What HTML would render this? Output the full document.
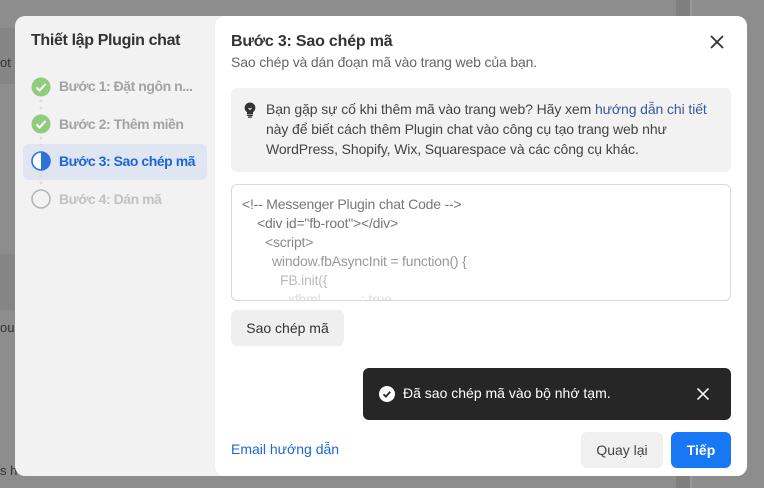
<!DOCTYPE html>
<html><head><meta charset="utf-8"><style>
*{box-sizing:border-box;margin:0;padding:0}
body{width:764px;height:488px;overflow:hidden;background:#8d8d8d;font-family:"Liberation Sans","Noto Sans CJK SC",sans-serif;position:relative}
.abs{position:absolute}
.bg1{left:0;top:28px;width:15px;height:56px;background:#858585}
.bg2{left:0;top:254px;width:15px;height:56px;background:#858585}
.strip{left:676px;top:0;width:14px;height:488px;background:#7f7f7f}
.strip2{left:690px;top:0;width:2px;height:488px;background:#9a9a9a}
.modal{left:15px;top:16px;width:732px;height:460px;background:#f2f2f2;border-radius:10px;overflow:hidden}
.right{left:200px;top:0;width:532px;height:460px;background:#fff;border-radius:10px}
.t{white-space:nowrap}
.step{left:8px;width:184px;height:36px;border-radius:6px}
.stxt{left:44px;font-size:14px;font-weight:bold;color:#a3a3a3;letter-spacing:-0.45px}
.code{left:16px;top:168px;width:500px;height:117px;border:1px solid #d9d9d9;border-radius:6px;overflow:hidden;padding:10px 10px;font-size:14px;line-height:19px;letter-spacing:-0.2px}
.btn{border-radius:6px;font-size:14px;text-align:center;line-height:36px}
</style></head><body>
<div class="abs bg1"></div><div class="abs bg2"></div>
<div class="abs strip"></div><div class="abs strip2"></div>
<div class="abs t" style="left:0;top:55px;font-size:13px;color:#333">ot</div>
<div class="abs t" style="left:0;top:320px;font-size:13px;color:#333">ou</div>
<div class="abs t" style="left:0;top:463px;font-size:13px;color:#333">s h</div>
<div class="abs modal">
  <div class="abs t" style="left:16px;top:16px;font-size:16px;font-weight:bold;color:#333;letter-spacing:-0.35px">Thiết lập Plugin chat</div>
  <div class="abs step" style="top:128px;background:#dfe6f1"></div>
  <svg class="abs" style="left:16px;top:61px" width="20" height="140" viewBox="0 0 20 140">
    <circle cx="10" cy="10" r="9.5" fill="#8fcc7e"/><path d="M5.5 10.5l3 3 6-6.5" stroke="#fff" stroke-width="2" fill="none"/>
    <circle cx="10" cy="47" r="9.5" fill="#8fcc7e"/><path d="M5.5 47.5l3 3 6-6.5" stroke="#fff" stroke-width="2" fill="none"/>
    <circle cx="10" cy="84" r="9" fill="#fff" stroke="#2e72d8" stroke-width="1.6"/><path d="M10 75a9 9 0 0 1 0 18z" fill="#2e72d8"/>
    <circle cx="10" cy="122" r="9" fill="none" stroke="#b5b5b5" stroke-width="1.6"/>
    <circle cx="10" cy="24" r="1.5" fill="#dcdcdc"/><circle cx="10" cy="31" r="1.5" fill="#dcdcdc"/>
    <circle cx="10" cy="61" r="1.5" fill="#dcdcdc"/><circle cx="10" cy="68" r="1.5" fill="#dcdcdc"/>
    <circle cx="10" cy="99" r="1.5" fill="#dcdcdc"/><circle cx="10" cy="106" r="1.5" fill="#dcdcdc"/>
  </svg>
  <div class="abs t stxt" style="top:62px">Bước 1: Đặt ngôn n...</div>
  <div class="abs t stxt" style="top:100px">Bước 2: Thêm miền</div>
  <div class="abs t stxt" style="top:137px;color:#1b66d8">Bước 3: Sao chép mã</div>
  <div class="abs t stxt" style="top:175px;color:#c2c2c2">Bước 4: Dán mã</div>

  <div class="abs right">
    <div class="abs t" style="left:16px;top:17px;font-size:16px;font-weight:bold;color:#333;letter-spacing:-0.2px">Bước 3: Sao chép mã</div>
    <div class="abs t" style="left:16px;top:38px;font-size:14px;color:#666;letter-spacing:-0.15px">Sao chép và dán đoạn mã vào trang web của bạn.</div>
    <svg class="abs" style="left:495px;top:19px" width="14" height="14" viewBox="0 0 14 14"><path d="M1 1l12 12M13 1L1 13" stroke="#333" stroke-width="1.8"/></svg>
    <div class="abs" style="left:16px;top:72px;width:500px;height:84px;background:#f2f2f2;border-radius:6px"></div>
    <svg class="abs" style="left:29px;top:86px" width="12" height="16" viewBox="0 0 12 16"><path d="M6 0.5a5.3 5.3 0 0 0-3 9.7v2h6v-2A5.3 5.3 0 0 0 6 0.5z" fill="#333"/><rect x="3.2" y="12.8" width="5.6" height="1.3" fill="#333"/><rect x="4" y="14.5" width="4" height="1.3" rx=".6" fill="#333"/><path d="M4.5 6l1.5 1.5 1.5-1.5" stroke="#f2f2f2" stroke-width="1" fill="none"/></svg>
    <div class="abs" style="left:51px;top:83px;font-size:14px;line-height:20px;color:#444;width:465px;letter-spacing:-0.1px;white-space:nowrap">Bạn gặp sự cố khi thêm mã vào trang web? Hãy xem <span style="color:#385898">hướng dẫn chi tiết</span><br>này để biết cách thêm Plugin chat vào công cụ tạo trang web như<br>WordPress, Shopify, Wix, Squarespace và các công cụ khác.</div>
    <div class="abs code">
      <div class="t" style="color:#777">&lt;!-- Messenger Plugin chat Code --&gt;</div>
      <div class="t" style="color:#777;padding-left:15px">&lt;div id="fb-root"&gt;&lt;/div&gt;</div>
      <div class="t" style="color:#888;padding-left:23px">&lt;script&gt;</div>
      <div class="t" style="color:#999;padding-left:30px">window.fbAsyncInit = function() {</div>
      <div class="t" style="color:#bbb;padding-left:38px">FB.init({</div>
      <div class="t" style="color:#ddd;padding-left:46px">xfbml&nbsp;&nbsp;&nbsp;&nbsp;&nbsp;&nbsp;&nbsp;&nbsp;&nbsp;&nbsp;&nbsp;: true,</div>
    </div>
    <div class="abs btn t" style="left:16px;top:294px;width:113px;height:36px;background:#efefef;color:#333">Sao chép mã</div>
    <div class="abs" style="left:148px;top:352px;width:368px;height:52px;background:#262626;border-radius:6px"></div>
    <svg class="abs" style="left:164px;top:370px" width="16" height="16" viewBox="0 0 16 16"><circle cx="8" cy="8" r="8" fill="#fff"/><path d="M4.5 8.3l2.3 2.3 4.5-4.8" stroke="#262626" stroke-width="1.8" fill="none"/></svg>
    <div class="abs t" style="left:188px;top:369px;font-size:14px;color:#fff">Đã sao chép mã vào bộ nhớ tạm.</div>
    <svg class="abs" style="left:482px;top:372px" width="12" height="12" viewBox="0 0 12 12"><path d="M.5.5l11 11M11.5.5l-11 11" stroke="#fff" stroke-width="1.6"/></svg>
    <div class="abs t" style="left:16px;top:425px;font-size:14px;color:#1b66d8">Email hướng dẫn</div>
    <div class="abs btn t" style="left:366px;top:416px;width:82px;height:36px;background:#f0f0f0;color:#444">Quay lại</div>
    <div class="abs btn t" style="left:456px;top:416px;width:60px;height:36px;background:#1877f2;color:#fff;font-weight:bold">Tiếp</div>
  </div>
</div>
</body></html>
